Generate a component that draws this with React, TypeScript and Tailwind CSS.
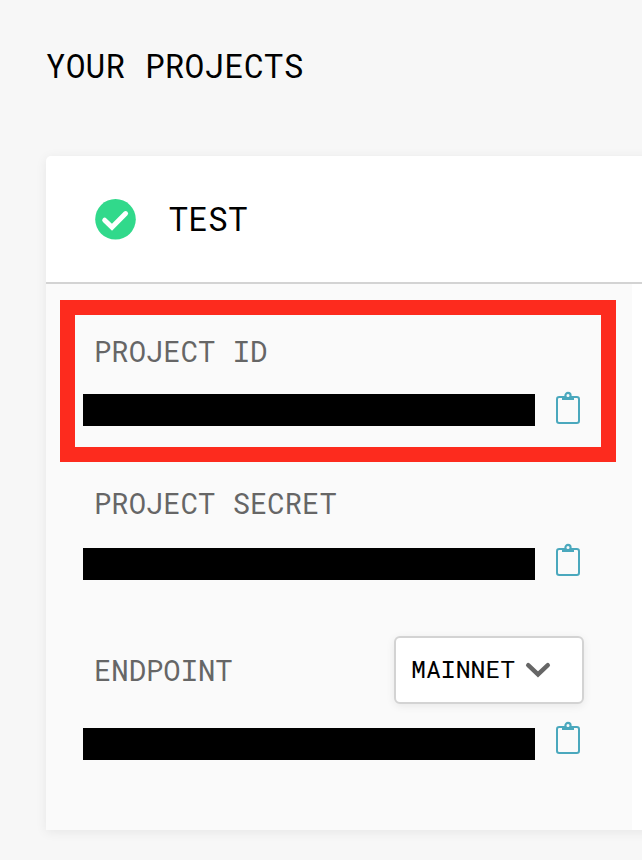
function ClipboardIcon() {
  return (
    <svg width="26" height="34" viewBox="0 0 26 34" fill="none" className="shrink-0">
      <rect x="2" y="6" width="22" height="26" rx="2.2" stroke="#4aa8bd" strokeWidth="2" />
      <rect x="7" y="5.2" width="12" height="3.8" fill="#4aa8bd" />
      <circle cx="13" cy="4.5" r="2.6" fill="#fafafa" stroke="#4aa8bd" strokeWidth="2.1" />
    </svg>
  );
}

function Label({ children }: { children: string }) {
  return <h3 className="text-[28.9px] leading-[38px] text-[#666666]">{children}</h3>;
}

function RedactedValue() {
  return <div className="h-8 w-[452px] shrink-0 bg-black" />;
}

export default function App() {
  return (
    <main className="h-[860px] w-full overflow-hidden bg-[#f7f7f7] pl-[46px] font-['Roboto_Mono','Liberation_Mono',monospace] text-black">
      <h1 className="pt-[43px] text-[33px] leading-[44px]">YOUR PROJECTS</h1>

      <section className="mt-[69px] w-[700px] rounded-t-[5px] bg-white shadow-[0_2px_12px_rgba(0,0,0,0.07)]">
        <header className="flex h-[128px] items-center border-b-2 border-[#d3d3d3] pl-[48.5px]">
          <svg width="41" height="41" viewBox="0 0 41 41" fill="none">
            <circle cx="20.5" cy="20.3" r="20.3" fill="#31d98b" />
            <path
              d="M9.7 21.2 17 28.2 30.6 14.6"
              stroke="white"
              strokeWidth="5"
              strokeLinecap="round"
              strokeLinejoin="miter"
            />
          </svg>
          <h2 className="ml-[33px] pb-[2px] text-[33px] leading-[44px]">TEST</h2>
        </header>

        <div className="flex h-[546px] w-[586px] flex-col bg-[#fafafa] pt-4">
          <div className="ml-[14px] h-[162px] w-[556px] border-[15px] border-[#fd2b1e] pt-[17px] pl-2">
            <div className="pl-[11px]">
              <Label>PROJECT ID</Label>
            </div>
            <div className="mt-[21px] flex items-start gap-5">
              <div className="pt-[3px]">
                <RedactedValue />
              </div>
              <ClipboardIcon />
            </div>
          </div>

          <div className="mt-[22px] pl-[37px]">
            <div className="pl-[11px]">
              <Label>PROJECT SECRET</Label>
            </div>
            <div className="mt-[21px] flex items-start gap-5">
              <div className="pt-[5px]">
                <RedactedValue />
              </div>
              <ClipboardIcon />
            </div>
          </div>

          <div className="mt-[56px] pl-[37px]">
            <div className="flex h-[68px] w-[501px] items-center justify-between pl-[11px]">
              <Label>ENDPOINT</Label>
              <button className="flex h-[68px] w-[190px] items-center gap-[10px] rounded-[6px] border-2 border-[#d3d3d3] bg-white pl-[15px] text-[24.8px] leading-8 shadow-[0_2px_8px_rgba(0,0,0,0.08)]">
                <span className="pb-[2px]">MAINNET</span>
                <svg width="26" height="18" viewBox="0 0 26 18" fill="none">
                  <path d="M3.2 4.2 13 13.4 22.8 4.2" stroke="#666666" strokeWidth="4.4" strokeLinecap="round" />
                </svg>
              </button>
            </div>
            <div className="mt-[17px] flex items-start gap-5">
              <div className="pt-[7px]">
                <RedactedValue />
              </div>
              <ClipboardIcon />
            </div>
          </div>
        </div>
      </section>
    </main>
  );
}
